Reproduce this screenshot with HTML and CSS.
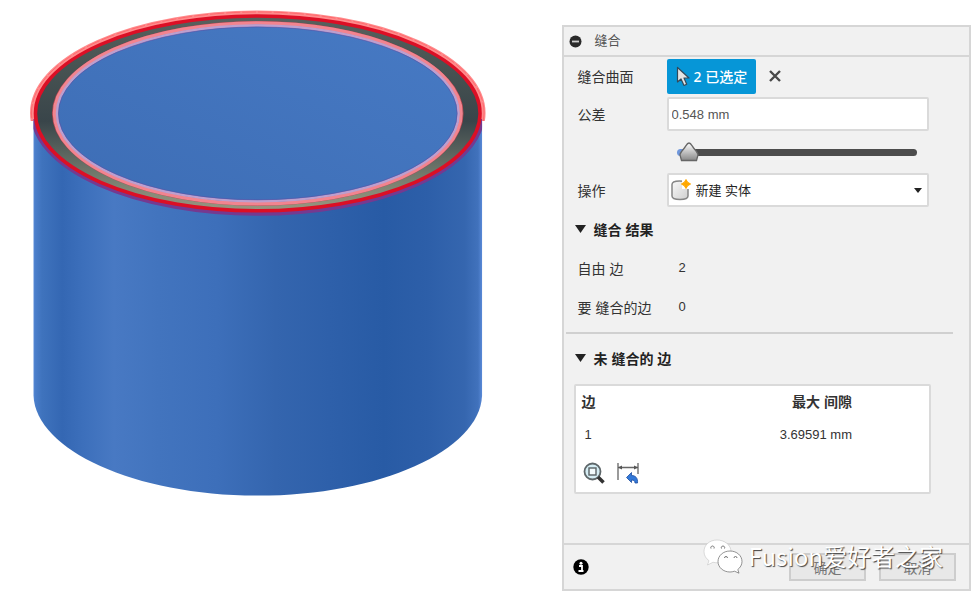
FILE: index.html
```html
<!DOCTYPE html>
<html lang="zh-CN">
<head>
    <meta charset="UTF-8">
    <title>缝合</title>
    <meta name="viewport" content="width=device-width, initial-scale=1.0">
    <link rel="stylesheet" href="styles.css">
</head>
<body>
    <main class="viewport">
        <svg class="model" viewBox="0 0 562 599" aria-hidden="true">
            <defs>
                <linearGradient id="side" gradientUnits="userSpaceOnUse" x1="33" y1="0" x2="483" y2="0">
                    <stop offset="0" stop-color="#6d9be0"/>
                    <stop offset="0.004" stop-color="#4b7fcc"/>
                    <stop offset="0.02" stop-color="#3f73bd"/>
                    <stop offset="0.065" stop-color="#3467b3"/>
                    <stop offset="0.11" stop-color="#3c6fbb"/>
                    <stop offset="0.18" stop-color="#4879c3"/>
                    <stop offset="0.28" stop-color="#4274be"/>
                    <stop offset="0.41" stop-color="#3d6fba"/>
                    <stop offset="0.54" stop-color="#3465ae"/>
                    <stop offset="0.66" stop-color="#2e60aa"/>
                    <stop offset="0.78" stop-color="#285ba5"/>
                    <stop offset="0.88" stop-color="#2d5fa9"/>
                    <stop offset="0.96" stop-color="#3566af"/>
                    <stop offset="0.99" stop-color="#4172bc"/>
                    <stop offset="1" stop-color="#5c8cdb"/>
                </linearGradient>
                <linearGradient id="face" x1="0" y1="1" x2="1" y2="0">
                    <stop offset="0" stop-color="#3d6db5"/>
                    <stop offset="1" stop-color="#477ac4"/>
                </linearGradient>
                <linearGradient id="rim" x1="0" y1="0" x2="0" y2="1">
                    <stop offset="0" stop-color="#59615e"/>
                    <stop offset="0.2" stop-color="#4b5654"/>
                    <stop offset="0.54" stop-color="#39454a"/>
                    <stop offset="0.75" stop-color="#646d64"/>
                    <stop offset="0.9" stop-color="#858976"/>
                    <stop offset="1" stop-color="#9a9580"/>
                </linearGradient>
                <clipPath id="above"><rect x="0" y="0" width="562" height="121"/></clipPath>
                <clipPath id="below"><path d="M33.500 119H482.500V240H33.500Z"/></clipPath>
            </defs>
            <path d="M33.500 114V396C36 451 136 496 258 496S480 451 482.500 396V114Z" fill="url(#side)"/>
            <g fill="none">
                <ellipse cx="258" cy="113" rx="225.500" ry="100" stroke="#ff8b8c" stroke-width="5" clip-path="url(#above)"/>
                <ellipse cx="258" cy="113" rx="226.500" ry="101" stroke="#ff5a60" stroke-width="1" stroke-dasharray="14 2" opacity=".7" clip-path="url(#above)"/>
                <ellipse cx="258" cy="113" rx="225" ry="100.500" stroke="#753a90" stroke-width="5" clip-path="url(#below)"/>
            </g>
            <ellipse cx="258" cy="113.500" rx="222.500" ry="97.500" fill="url(#rim)" stroke="#dc0f25" stroke-width="3.500"/>
            <ellipse cx="258" cy="113.500" rx="205.500" ry="92" fill="none" stroke="#b8434c" stroke-width="1"/>
            <ellipse cx="258" cy="113.500" rx="203.500" ry="90.500" fill="url(#face)" stroke="#f2848f" stroke-width="3.500"/>
            <ellipse cx="258" cy="113.500" rx="201" ry="88" fill="none" stroke="#bd9fce" stroke-width="2.500"/>
            <ellipse cx="258" cy="113.500" rx="199.500" ry="86.500" fill="none" stroke="#5a51a5" stroke-width="1" opacity=".6"/>
        </svg>
    </main>

    <section class="dialog">
        <header class="dialog-header">
            <svg width="13" height="13" viewBox="0 0 13 13" aria-hidden="true">
                <circle cx="6.500" cy="6.500" r="6" fill="#2a2a2a"/>
                <path d="M3 6.500h7" stroke="#d0d0d0" stroke-width="1.800"/>
            </svg>
            <h1>缝合</h1>
        </header>

        <form class="dialog-body" id="stitch">
            <div class="row">
                <label for="surfaces">缝合曲面</label>
                <button type="button" class="select-button" id="surfaces">
                    <svg width="14" height="21" viewBox="0 0 14 21" aria-hidden="true">
                        <path d="M1.500 1.500V16L5 13l3 6.500 2.700-1.300L8 12h5Z" fill="#e4e4e4" stroke="#33495a" stroke-width="1.200" stroke-linejoin="round"/>
                    </svg>
                    <span>2 已选定</span>
                </button>
                <button type="button" class="clear-button" aria-label="清除">
                    <svg width="12" height="12" viewBox="0 0 12 12" aria-hidden="true">
                        <path d="M1 1l10 10M11 1L1 11" stroke="#484848" stroke-width="2.400"/>
                    </svg>
                </button>
            </div>
            <div class="row">
                <label for="tolerance">公差</label>
                <input type="text" class="field" id="tolerance" value="0.548 mm">
            </div>
            <div class="row">
                <span class="row-spacer"></span>
                <input type="range" class="slider" aria-label="公差" min="0" max="100" value="1">
            </div>
            <div class="row">
                <label for="operation">操作</label>
                <div class="select-wrap">
                    <select class="field" id="operation">
                        <option>新建 实体</option>
                    </select>
                    <svg class="body-icon" width="20" height="22" viewBox="0 0 20 22" aria-hidden="true">
                        <defs>
                            <linearGradient id="body" x1="0" y1="0" x2="1" y2="1">
                                <stop offset="0" stop-color="#f9f9f9"/>
                                <stop offset="1" stop-color="#cfcfcf"/>
                            </linearGradient>
                        </defs>
                        <path d="M1 5.500C1 3 5 2 8.500 2S17 3 17 6V17c0 2.500-4 3.500-8 3.500S1 19.500 1 17Z" fill="url(#body)" stroke="#868686" stroke-width="1.500"/>
                        <path d="M11 0h9v10h-9Z" fill="#fff"/>
                        <path d="M15 .5l1.600 2.700 3 1.800-3 1.800L15 9.500l-1.600-2.700-3-1.800 3-1.800Z" fill="#ffa800" stroke="#ffa800"/>
                    </svg>
                    <svg class="arrow" width="8" height="5" viewBox="0 0 8 5" aria-hidden="true">
                        <path d="M0 0h8L4 5Z" fill="#222"/>
                    </svg>
                </div>
            </div>

            <h2><svg width="11" height="8" viewBox="0 0 11 8" aria-hidden="true"><path d="M0 0h11L5.500 8Z" fill="#222"/></svg>缝合 结果</h2>
            <div class="row result">
                <label for="freeEdges">自由 边</label>
                <output id="freeEdges">2</output>
            </div>
            <div class="row result">
                <label for="stitchEdges">要 缝合的边</label>
                <output id="stitchEdges">0</output>
            </div>
            <hr>

            <h2><svg width="11" height="8" viewBox="0 0 11 8" aria-hidden="true"><path d="M0 0h11L5.500 8Z" fill="#222"/></svg>未 缝合的 边</h2>
            <div class="edges">
                <table>
                    <thead>
                        <tr><th>边</th><th>最大 间隙</th></tr>
                    </thead>
                    <tbody>
                        <tr><td>1</td><td>3.69591 mm</td></tr>
                    </tbody>
                </table>
                <div class="edge-tools">
                    <button type="button" aria-label="缩放">
                        <svg width="22" height="22" viewBox="0 0 22 22" aria-hidden="true">
                            <circle cx="9.500" cy="9.500" r="8" fill="#d5edf4" stroke="#5e676a" stroke-width="1.800"/>
                            <rect x="6" y="6" width="7" height="7" fill="#f2fafc" stroke="#596265" stroke-width="1.400"/>
                            <path d="M15 15l5.500 5.500" stroke="#333" stroke-width="3.600"/>
                        </svg>
                    </button>
                    <button type="button" aria-label="反转">
                        <svg width="22" height="22" viewBox="0 0 22 22" aria-hidden="true">
                            <path d="M1 1v17M21 1v11M1 5.500h20" fill="none" stroke="#666" stroke-width="1.300"/>
                            <path d="M1 5.500l4-2v4ZM21 5.500l-4-2v4Z" fill="#555"/>
                            <path d="M9.500 15.500l5-5v3c4 0 6.500 2.500 6 7.500h-2.500c0-2-1-3-3.500-3v2.500Z" fill="#3278d8" stroke="#1d4da0" stroke-width=".8"/>
                        </svg>
                    </button>
                </div>
            </div>
        </form>

        <footer class="dialog-footer">
            <svg width="16" height="16" viewBox="0 0 16 16" aria-hidden="true">
                <circle cx="8" cy="8" r="7.700"/>
                <circle cx="8" cy="4.200" r="1.500" fill="#fff"/>
                <path d="M6 7h3v4.500M5.500 12h5" fill="none" stroke="#fff" stroke-width="1.800"/>
            </svg>
            <div class="actions">
                <button type="submit" form="stitch">确定</button>
                <button type="button">取消</button>
            </div>
        </footer>

        <div class="watermark">
            <svg width="40" height="35" viewBox="0 0 40 35" aria-hidden="true">
                <path d="M14 1C6.500 1 1 6 1 12.500c0 4 2 7 5 9.200L4.500 26l5.500-2.800c1.300.4 3 .6 4.500.6C22 24 28 19 28 12.500S21.500 1 14 1Z" fill="#fff" stroke="#bbb" stroke-width=".5"/>
                <path d="M27 12c-6.800 0-12 4.700-12 10.500S20.200 33 27 33c1.500 0 3-.3 4.500-.8l4.500 2-1.200-3.700c2.600-2 4.200-4.800 4.200-8C39 16.700 33.800 12 27 12Z" fill="#fff" stroke="#666" stroke-width=".7"/>
                <g fill="none" stroke="#666" stroke-width=".9">
                    <path d="M8 9.500a1.700 1.700 0 1 1 3 0M18.500 9.500a1.700 1.700 0 1 1 3 0M21.500 19a1.500 1.500 0 1 1 3 0M31 19a1.500 1.500 0 1 1 3 0"/>
                </g>
            </svg>
            <span>Fusion爱好者之家</span>
        </div>
    </section>
</body>
</html>
```

FILE: styles.css
```css
* { box-sizing: border-box; }
body {
    display: flex;
    align-items: flex-start;
    margin: 0;
    background: #fff;
    color: #333;
    font-family: "Liberation Sans", "Noto Sans CJK SC", sans-serif;
    font-size: 14px;
}
button, input, select { font-family: inherit; color: inherit; }
button { padding: 0; border: none; background: none; cursor: pointer; }
svg { flex: none; }

.viewport { flex: 1; min-width: 0; }
.model { display: block; width: 100%; }

.dialog {
    position: relative;
    width: 42%;
    margin: 25px 4px 0 0;
    border: 2px solid #d6d6d6;
    background: #f1f1f1;
}
.dialog-header {
    display: flex;
    align-items: center;
    gap: 13px;
    height: 30px;
    padding-left: 5px;
    border-bottom: 2px solid #d6d6d6;
}
.dialog-header h1 {
    margin: 0;
    font-size: 13px;
    line-height: 16px;
    font-weight: normal;
    color: #555;
}

.dialog-body { padding-bottom: 49px; }
.row {
    display: flex;
    align-items: center;
    height: 38px;
    padding: 0 40px 0 14px;
}
.row label, .row-spacer { flex: none; width: 89px; }
.row.result { height: 39px; }
.row.result label { width: 101px; }
.row output { font-size: 13px; }

.select-button {
    display: flex;
    align-items: center;
    gap: 4px;
    height: 35px;
    padding: 0 9px;
    border-radius: 2px;
    background: #0696d7;
    color: #fff;
    font-size: 14px;
    font-weight: 500;
    font-family: "Noto Sans", "Noto Sans CJK SC", sans-serif;
}
.clear-button { display: flex; margin-left: 13px; }

.field {
    width: 100%;
    height: 34px;
    padding: 0 3px;
    border: 2px solid #dadada;
    border-radius: 2px;
    background: #fff;
    font-size: 13px;
}
input.field { color: #555; }
.select-wrap { position: relative; flex: 1; }
select.field { display: block; appearance: none; padding-left: 27px; color: #222; }
.body-icon { position: absolute; left: 4px; top: 6px; pointer-events: none; }
.arrow { position: absolute; right: 7px; top: 15px; pointer-events: none; }

.slider {
    appearance: none;
    flex: 1;
    height: 20px;
    margin: 0 12px 0 10px;
    background: none;
}
.slider::-webkit-slider-runnable-track {
    height: 7px;
    border-radius: 4px;
    background: linear-gradient(to right, #6f97dc 8px, #4c4c4c 8px);
}
.slider::-webkit-slider-thumb {
    appearance: none;
    width: 20px;
    height: 20px;
    margin-top: -7px;
    background: url("data:image/svg+xml,%3Csvg xmlns='http://www.w3.org/2000/svg' width='20' height='20'%3E%3ClinearGradient id='g' x2='0' y2='1'%3E%3Cstop stop-color='%23fff'/%3E%3Cstop offset='1' stop-color='%23888'/%3E%3C/linearGradient%3E%3Cpath d='M10 1C12 1 13 4 15 6.500S19 11 19 13L17.500 18.500H2.500L1 13C1 11 3 9 5 6.500S8 1 10 1Z' fill='url(%23g)' stroke='%23666' stroke-width='1.300'/%3E%3C/svg%3E") no-repeat;
}

h2 {
    display: flex;
    align-items: center;
    gap: 8px;
    height: 39px;
    margin: 0;
    padding-left: 11px;
    font-size: 14px;
    color: #222;
}
hr {
    height: 2px;
    margin: 6px 16px 4px 2px;
    border: none;
    background: #d0d0d0;
}

.edges {
    margin: 7px 38px 0 10px;
    border: 2px solid #dadada;
    border-radius: 2px;
    background: #fff;
}
table { width: 100%; border-collapse: collapse; }
th { height: 30px; padding: 0; font-size: 14px; text-align: left; }
td { height: 37px; padding: 0; font-size: 13px; }
th:first-child { padding-left: 6px; }
td:first-child { padding-left: 9px; }
th:last-child, td:last-child { padding-right: 77px; text-align: right; }
.edge-tools {
    display: flex;
    align-items: center;
    gap: 12px;
    height: 39px;
    padding-left: 7px;
}
.edge-tools button { display: flex; }

.dialog-footer {
    display: flex;
    align-items: center;
    justify-content: space-between;
    height: 46px;
    padding: 0 13px 0 9px;
    border-top: 2px solid #d6d6d6;
}
.actions { display: flex; gap: 13px; }
.actions button {
    width: 77px;
    height: 28px;
    border: 2px solid #cdcdcd;
    background: #e8e8e8;
    color: #777;
    font-size: 14px;
}

.watermark {
    position: absolute;
    right: 26px;
    bottom: 15px;
    display: flex;
    align-items: center;
    gap: 6px;
    color: #fff;
    font: 24px/36px "Noto Sans CJK SC", sans-serif;
    text-shadow: 1px 1px 1px #444;
    white-space: nowrap;
    pointer-events: none;
}
```
